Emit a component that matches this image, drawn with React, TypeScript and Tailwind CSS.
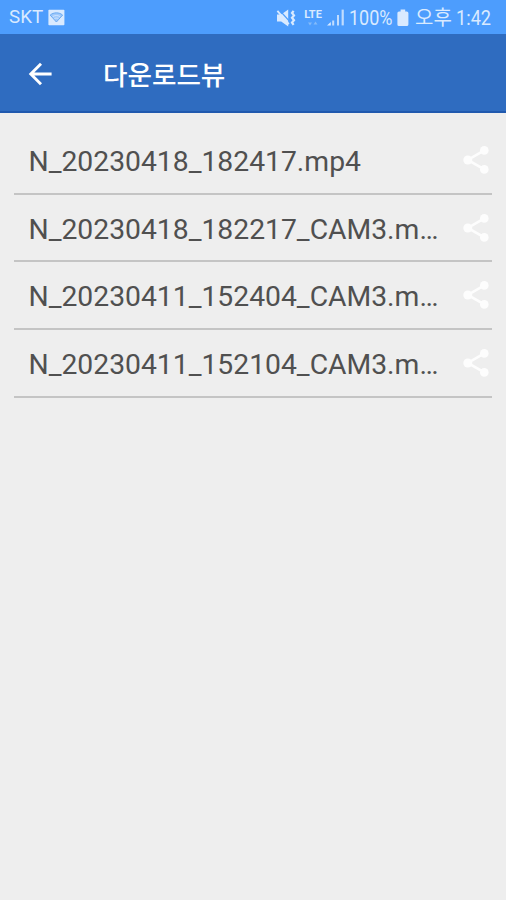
import React from 'react';

interface DownloadItem {
  id: number;
  label: string;
}

const downloads: DownloadItem[] = [
  { id: 1, label: 'N_20230418_182417.mp4' },
  { id: 2, label: 'N_20230418_182217_CAM3.m…' },
  { id: 3, label: 'N_20230411_152404_CAM3.m…' },
  { id: 4, label: 'N_20230411_152104_CAM3.m…' },
];

const ShareIcon: React.FC = () => (
  <svg width="28" height="30" viewBox="0 0 28 30" className="shrink-0">
    <path d="M22.3 5.4 5.8 15l16.5 9.4" fill="none" stroke="#fdfdfd" strokeWidth="2.6" />
    <circle cx="22.3" cy="5.4" r="4.3" fill="#fdfdfd" />
    <circle cx="5.8" cy="15" r="4.5" fill="#fdfdfd" />
    <circle cx="22.3" cy="24.4" r="4.3" fill="#fdfdfd" />
  </svg>
);

const WifiBadge: React.FC = () => (
  <svg width="17" height="17" viewBox="0 0 17 17">
    <rect x="0.4" y="0.8" width="16" height="15.4" rx="0.8" fill="#d9eaff" />
    <path d="M2.2 6.1c3.4-3 9-3 12.4 0L8.4 13z" fill="#9fc9fb" stroke="#68a9f2" strokeWidth="1" />
    <path d="M4.7 7.7c2.2-1.6 5.2-1.6 7.4 0M6.4 9.7c1.2-.8 2.8-.8 4 0" fill="none" stroke="#d9eaff" strokeWidth="0.8" />
  </svg>
);

const MuteIcon: React.FC = () => (
  <svg width="20" height="18" viewBox="0 0 20 18" fill="none">
    <path d="M1 5.6h4.2l7-5v16.8l-7-5H1z" fill="#d9eaff" />
    <path d="M3.6 1.4l10 11" stroke="#4d9dfd" strokeWidth="1.4" />
    <path d="M1.4 1.8l11.4 13.4" stroke="#d9eaff" strokeWidth="1.8" />
    <path d="M17.6 1.8l-1.6 2.2 2 2.4-2 2.4 2 2.4-2 2.4 1.6 2.2" stroke="#d9eaff" strokeWidth="2.2" />
  </svg>
);

const LteIcon: React.FC = () => (
  <div className="flex w-[20px] flex-col items-center">
    <span className="text-[11px] leading-[10px] font-bold">LTE</span>
    <svg width="10" height="5" viewBox="0 0 10 5" className="mt-px" fill="#84bbfa">
      <path d="M0 1.5h4L2 4.5zM5.5 3.5h4l-2-3z" />
    </svg>
  </div>
);

const SignalIcon: React.FC = () => (
  <svg width="18" height="17" viewBox="0 0 18 17">
    <path d="M0 16.4l3.8-3.4v3.4z" fill="#d9eaff" />
    <path d="M5.2 11.4h2v5h-2zM10 6h2v10.4h-2z" fill="#c1dcfe" />
    <path d="M14.6 0.6h2.2v15.8h-2.2z" fill="#c1dcfe" />
  </svg>
);

const BatteryIcon: React.FC = () => (
  <svg width="12" height="18" viewBox="0 0 12 18" fill="#d9eaff">
    <path d="M3.6 0.6h4.6v1.8h1.6q1.6 0 1.6 1.6v11.5q0 1.6-1.6 1.6H2q-1.6 0-1.6-1.6V4q0-1.6 1.6-1.6h1.6z" />
  </svg>
);

const StatusBar: React.FC = () => (
  <div className="flex h-[34px] items-center justify-between bg-[#4d9dfd] pt-px pr-[14px] pl-[9px] text-[20px] leading-none text-[#d9eaff]">
    <div className="flex items-center">
      <span className="w-[38.5px] text-[18.8px] whitespace-nowrap">SKT</span>
      <WifiBadge />
    </div>
    <div className="flex items-center">
      <MuteIcon />
      <div className="ml-[7px]">
        <LteIcon />
      </div>
      <div className="ml-[4px]">
        <SignalIcon />
      </div>
      <span className="ml-[4px] flex w-[44px] origin-left scale-x-[0.9] whitespace-nowrap">100%</span>
      <div className="ml-[4px]">
        <BatteryIcon />
      </div>
      <span className="ml-[6px] w-[36px] text-[20px] whitespace-nowrap">오후</span>
      <span className="ml-[5px] w-[36px] origin-left scale-x-[0.91] whitespace-nowrap">1:42</span>
    </div>
  </div>
);

const Toolbar: React.FC = () => (
  <header className="flex h-[79px] items-center border-b-2 border-[#2059ae] bg-[#2f6cc0] pt-[2px] pl-[27px] text-white">
    <svg width="26" height="26" viewBox="0 0 26 26" fill="none" stroke="currentColor" strokeWidth="2.9">
      <path d="M24.6 13H3.6M14 2.8 3.8 13 14 23.2" />
    </svg>
    <h1 className="mt-[2px] ml-[50px] font-['Noto_Sans_CJK_KR',sans-serif] text-[26.6px] leading-none font-medium whitespace-nowrap">
      다운로드뷰
    </h1>
  </header>
);

const App: React.FC = () => {
  return (
    <div className="min-h-screen bg-[#eeeeee] font-['Roboto','Noto_Sans_CJK_KR',sans-serif]">
      <StatusBar />
      <Toolbar />
      <ul className="mx-[14px] pt-[14px]">
        {downloads.map((item) => (
          <li
            key={item.id}
            className="flex h-[67.7px] items-center justify-between border-b-2 border-[#c4c4c4] pr-[2px] pl-[14.5px]"
          >
            <span className="pt-[4px] text-[28.3px] leading-[40px] whitespace-nowrap text-[#505050]">{item.label}</span>
            <button aria-label="공유">
              <ShareIcon />
            </button>
          </li>
        ))}
      </ul>
    </div>
  );
};

export default App;
